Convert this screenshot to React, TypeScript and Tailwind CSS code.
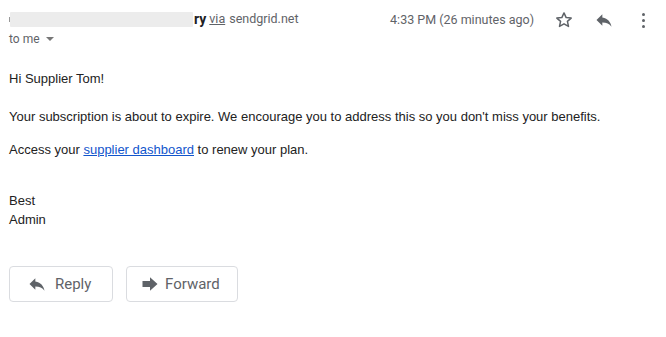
import React from 'react';

const ReplyIcon = ({ className = '' }: { className?: string }) => (
  <svg viewBox="0 0 24 24" className={className} fill="currentColor">
    <path d="M10 9V5l-7 7 7 7v-4.1c5 0 8.5 1.6 11 5.1-1-5-4-10-11-11z" />
  </svg>
);

const ForwardIcon = ({ className = '' }: { className?: string }) => (
  <svg viewBox="0 0 24 24" className={className} fill="currentColor">
    <path d="M3 8.5h9V4l9 8-9 8v-4.5H3z" />
  </svg>
);

const StarIcon = ({ className = '' }: { className?: string }) => (
  <svg viewBox="0 0 24 24" className={className} fill="none" stroke="currentColor" strokeWidth="1.8" strokeLinejoin="round">
    <path d="M12 3.5l2.6 5.6 6 .6-4.5 4 1.3 6-5.4-3.1-5.4 3.1 1.3-6-4.5-4 6-.6z" />
  </svg>
);

export default function App() {
  return (
    <div className="w-[666px] h-[337px] bg-white relative" style={{ fontFamily: 'Roboto, "Liberation Sans", sans-serif' }}>
      {/* header */}
      <div className="flex items-start justify-between pl-[9px] pr-[21px] pt-[9px]">
        <div className="flex flex-col">
          <div className="flex items-center h-[20px]">
            <span className="w-[2px] h-[5px] bg-[#999] self-center mr-[-1px]" />
            <span className="w-[183px] h-[15px] bg-[#ececec] rounded-[1px]" />
            <span className="font-bold text-[14px] text-[#202124] ml-[1px]">ry</span>
            <span className="underline text-[#5f6368] ml-[3px] text-[12.5px]">via</span>
            <span className="text-[#5f6368] ml-[4px] text-[12.5px]">sendgrid.net</span>
          </div>
          <div className="flex items-center mt-[1px] text-[12px] text-[#5f6368] h-[18px]">
            <span>to me</span>
            <span className="ml-[6px] w-0 h-0 border-l-[4px] border-r-[4px] border-t-[4px] border-l-transparent border-r-transparent border-t-[#777]" />
          </div>
        </div>
        <div className="flex items-center h-[22px] text-[12.5px] text-[#5f6368]">
          <span className="mr-[20px]">4:33 PM (26 minutes ago)</span>
          <StarIcon className="w-[20px] h-[20px] text-[#5f6368]" />
          <ReplyIcon className="w-[20px] h-[20px] text-[#5f6368] ml-[20px]" />
          <div className="ml-[28px] flex flex-col gap-[3px] items-center">
            <span className="w-[3px] h-[3px] rounded-full bg-[#5f6368]" />
            <span className="w-[3px] h-[3px] rounded-full bg-[#5f6368]" />
            <span className="w-[3px] h-[3px] rounded-full bg-[#5f6368]" />
          </div>
        </div>
      </div>

      {/* body */}
      <div className="pl-[9px] pt-[22px] text-[13px] text-[#222] leading-[17px]" style={{ fontFamily: '"Liberation Sans", Arial, sans-serif' }}>
        <p>Hi Supplier Tom!</p>
        <p className="mt-[21px]">Your subscription is about to expire. We encourage you to address this so you don't miss your benefits.</p>
        <p className="mt-[16px]">
          Access your <a className="text-[#1155cc] underline">supplier dashboard</a> to renew your plan.
        </p>
        <p className="mt-[34px]">Best</p>
        <p className="mt-[2px]">Admin</p>
      </div>

      {/* actions */}
      <div className="flex gap-[13px] pl-[9px] mt-[38px]">
        <button className="w-[104px] h-[36px] border border-[#dadce0] rounded-[4px] flex items-center pl-[17px] text-[15px] text-[#5f6368]">
          <ReplyIcon className="w-[20px] h-[20px] mr-[8px]" />
          Reply
        </button>
        <button className="w-[112px] h-[36px] border border-[#dadce0] rounded-[4px] flex items-center pl-[13px] text-[15px] text-[#5f6368]">
          <ForwardIcon className="w-[20px] h-[20px] mr-[5px]" />
          Forward
        </button>
      </div>
    </div>
  );
}
